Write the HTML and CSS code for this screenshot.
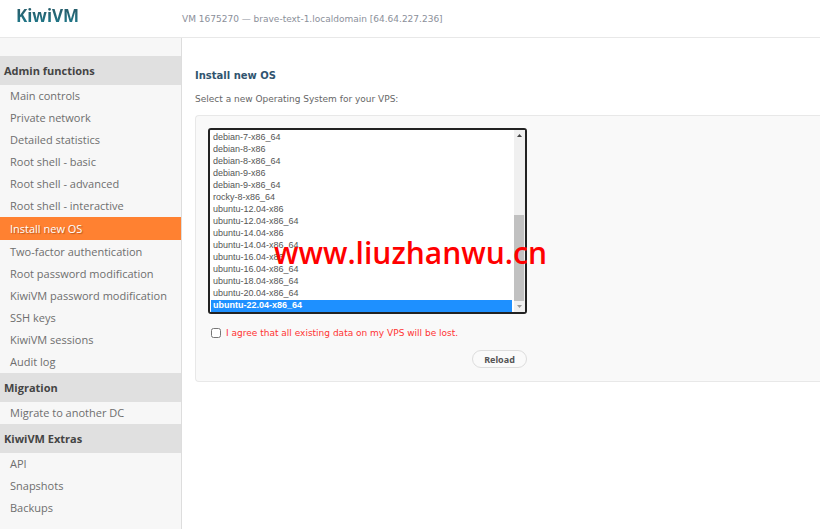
FILE: index.html
```
<!DOCTYPE html>
<html lang="en">
<head>
    <meta charset="UTF-8">
    <meta name="viewport" content="width=device-width, initial-scale=1.0">
    <title>KiwiVM</title>
    <link rel="stylesheet" href="styles.css">
</head>
<body>
    <header class="header">
        <a class="logo" href="#">KiwiVM</a>
        <div class="vm-info">VM 1675270 — brave-text-1.localdomain [64.64.227.236]</div>
    </header>
    <div class="wrapper">
        <nav class="sidebar">
            <h3>Admin functions</h3>
            <ul>
                <li><a href="#">Main controls</a></li>
                <li><a href="#">Private network</a></li>
                <li><a href="#">Detailed statistics</a></li>
                <li><a href="#">Root shell - basic</a></li>
                <li><a href="#">Root shell - advanced</a></li>
                <li><a href="#">Root shell - interactive</a></li>
                <li><a class="active" href="#">Install new OS</a></li>
                <li><a href="#">Two-factor authentication</a></li>
                <li><a href="#">Root password modification</a></li>
                <li><a href="#">KiwiVM password modification</a></li>
                <li><a href="#">SSH keys</a></li>
                <li><a href="#">KiwiVM sessions</a></li>
                <li><a href="#">Audit log</a></li>
            </ul>
            <h3>Migration</h3>
            <ul>
                <li><a href="#">Migrate to another DC</a></li>
            </ul>
            <h3>KiwiVM Extras</h3>
            <ul>
                <li><a href="#">API</a></li>
                <li><a href="#">Snapshots</a></li>
                <li><a href="#">Backups</a></li>
            </ul>
        </nav>
        <main class="content">
            <h1>Install new OS</h1>
            <p><label for="os">Select a new Operating System for your VPS:</label></p>
            <form class="panel">
                <div class="fields">
                    <div class="os-list">
                        <select id="os" name="os" size="15">
                            <option>centos-6-x86</option>
                            <option>centos-6-x86_64</option>
                            <option>centos-7-x86_64</option>
                            <option>centos-8-x86_64</option>
                            <option>centos-8-stream-x86_64</option>
                            <option>centos-9-stream-x86_64</option>
                            <option>almalinux-8-x86_64</option>
                            <option>almalinux-9-x86_64</option>
                            <option>debian-10-x86_64</option>
                            <option>debian-11-x86_64</option>
                            <option>debian-6-x86</option>
                            <option>debian-6-x86_64</option>
                            <option>debian-7-x86</option>
                            <option>debian-7-x86_64</option>
                            <option>debian-8-x86</option>
                            <option>debian-8-x86_64</option>
                            <option>debian-9-x86</option>
                            <option>debian-9-x86_64</option>
                            <option>rocky-8-x86_64</option>
                            <option>ubuntu-12.04-x86</option>
                            <option>ubuntu-12.04-x86_64</option>
                            <option>ubuntu-14.04-x86</option>
                            <option>ubuntu-14.04-x86_64</option>
                            <option>ubuntu-16.04-x86</option>
                            <option>ubuntu-16.04-x86_64</option>
                            <option>ubuntu-18.04-x86_64</option>
                            <option>ubuntu-20.04-x86_64</option>
                            <option selected>ubuntu-22.04-x86_64</option>
                        </select>
                        <div class="scrollbar" aria-hidden="true">
                            <svg width="11" height="11" viewBox="0 0 11 11"><path d="M3 7l2.5-3L8 7z" fill="#444"/></svg>
                            <div class="thumb"></div>
                            <svg width="11" height="11" viewBox="0 0 11 11"><path d="M3 4l2.5 3L8 4z" fill="#999"/></svg>
                        </div>
                        <div class="watermark">www.liuzhanwu.cn</div>
                    </div>
                    <div class="agree">
                        <input type="checkbox" id="agree" name="agree">
                        <label for="agree">I agree that all existing data on my VPS will be lost.</label>
                    </div>
                    <button type="button">Reload</button>
                </div>
            </form>
        </main>
    </div>
</body>
</html>
```
FILE: styles.css
```
body {
    margin: 0;
    min-height: 100vh;
    display: flex;
    flex-direction: column;
    background-color: #fff;
    color: #666;
    font-family: "DejaVu Sans", Verdana, sans-serif;
    font-size: 9px;
}

.header {
    display: flex;
    height: 37px;
    border-bottom: 1px solid #e8e8e8;
}

.logo {
    width: 182px;
    padding-left: 16px;
    box-sizing: border-box;
    font: bold 17px/32px "Noto Sans", "Segoe UI", sans-serif;
    text-decoration: none;
    color: transparent;
    background: linear-gradient(#27606e 30%, #1b8093 75%);
    -webkit-background-clip: text;
    background-clip: text;
}

.vm-info {
    line-height: 39px;
    color: #8b8f9a;
}

.wrapper {
    flex: 1;
    display: flex;
}

.sidebar {
    width: 181px;
    padding-top: 18px;
    background-color: #f7f7f7;
    border-right: 1px solid #ddd;
    font: 11px "Open Sans", "Segoe UI", sans-serif;
}

.sidebar h3 {
    margin: 0;
    padding-left: 4px;
    font-size: 11px;
    line-height: 29px;
    color: #444;
    background-color: #e0e0e0;
}

.sidebar ul {
    margin: 0;
    padding: 0;
    list-style: none;
}

.sidebar a {
    display: block;
    padding-left: 10px;
    line-height: 22px;
    color: #6e6e6e;
    text-decoration: none;
}

.sidebar a.active {
    margin-bottom: 1px;
    line-height: 23px;
    color: #fff;
    background-color: #ff8131;
    text-shadow: 1px 1px 1px #b85a20;
}

.content {
    flex: 1;
    padding: 30px 0 0 13px;
}

.content h1 {
    margin: 0;
    font-size: 10px;
    line-height: 16px;
    color: #30546f;
}

.content p {
    margin: 8px 0;
    line-height: 15px;
}

.panel {
    padding: 12px;
    background-color: #f9f9f9;
    border: 1px solid #e8e8e8;
    border-right: 0;
    border-radius: 4px 0 0 4px;
}

.fields {
    display: flex;
    flex-direction: column;
    width: 319px;
}

.os-list {
    position: relative;
}

select {
    display: block;
    width: 100%;
    height: 186px;
    padding: 1px 13px 1px 1px;
    border: 2px solid #222;
    border-radius: 3px;
    outline: none;
    background-color: #fff;
    color: #555;
    font: 9px "Liberation Sans", Arial, sans-serif;
    scrollbar-width: none;
}

option {
    min-height: 12px;
    padding: 0 2px;
    line-height: 12px;
    box-sizing: border-box;
}

option:checked {
    color: #fff;
    font-weight: bold;
    background: linear-gradient(#1e90ff, #1e90ff);
}

.scrollbar {
    position: absolute;
    top: 2px;
    right: 2px;
    bottom: 2px;
    width: 11px;
    display: flex;
    flex-direction: column;
    background-color: #f0f0f0;
    pointer-events: none;
}

.scrollbar .thumb {
    height: 86px;
    margin: auto 1px 0 0;
    background-color: #c1c1c1;
}

.watermark {
    position: absolute;
    top: 102px;
    left: 66px;
    font: 600 30px/46px "Open Sans", "Comic Sans MS", sans-serif;
    color: #f00;
    white-space: nowrap;
    pointer-events: none;
}

.agree {
    display: flex;
    align-items: center;
    margin: 14px 0 12px 3px;
    color: #ff3333;
}

.agree input {
    width: 10px;
    height: 10px;
    margin: 0 5px 0 0;
}

button {
    align-self: flex-end;
    width: 55px;
    height: 18px;
    margin-bottom: 1px;
    padding: 0;
    border: 1px solid #ddd;
    border-radius: 9px;
    background-color: #fafafa;
    color: #555;
    font: bold 9px "Noto Sans", "Segoe UI", sans-serif;
    cursor: pointer;
}
```
